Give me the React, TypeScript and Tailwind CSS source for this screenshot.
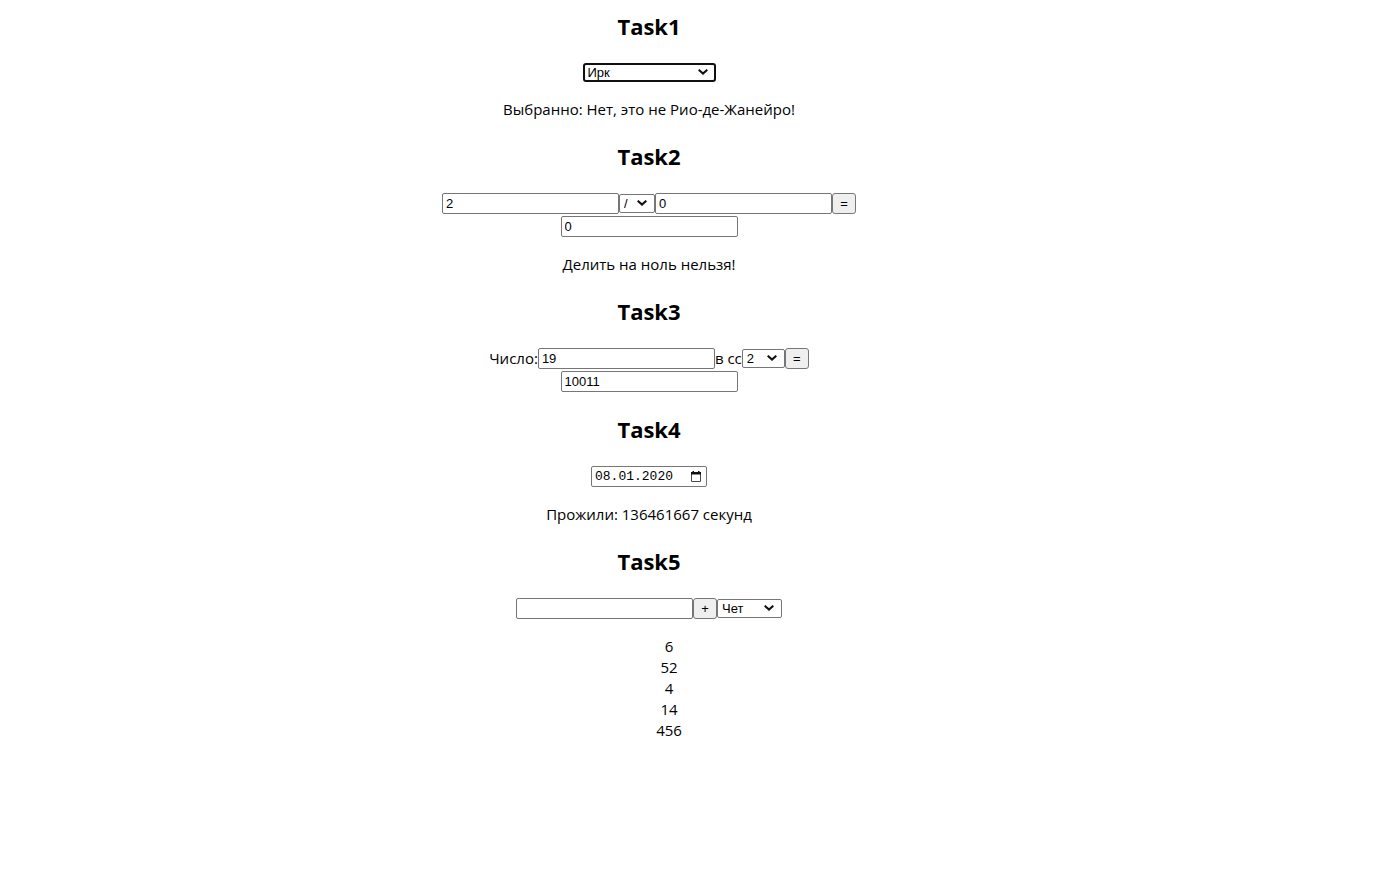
import { useState } from 'react';
import type { ReactNode } from 'react';

const field =
  "block h-[21px] w-[177px] rounded-[2px] border border-[#767676] bg-white px-[3px] font-['Liberation_Sans',Arial,sans-serif] text-[13px] leading-4 text-black";
const button =
  "block h-[21px] w-6 rounded-[3px] border border-[#767676] bg-[#efefef] font-['Liberation_Sans',Arial,sans-serif] text-[13px] leading-4 text-black";

function Task({ title, children }: { title: string; children: ReactNode }) {
  return (
    <section className="flex flex-col items-center">
      <h2 className="mb-5 text-[22px] leading-[31px] font-bold">{title}</h2>
      {children}
    </section>
  );
}

function Row({ children }: { children: ReactNode }) {
  return <div className="flex h-[23px] items-center justify-center">{children}</div>;
}

function Result({ children }: { children: ReactNode }) {
  return <p className="mt-4 leading-[21px]">{children}</p>;
}

interface PickerProps {
  id?: string;
  label?: string;
  look: string;
  value: string;
  options: string[];
  onChange: (value: string) => void;
}

function Picker({ id, label, look, value, options, onChange }: PickerProps) {
  return (
    <div className="relative">
      <select
        id={id}
        aria-label={label}
        value={value}
        onChange={(e) => onChange(e.target.value)}
        className={`${look} block h-[19px] appearance-none bg-white font-['Liberation_Sans',Arial,sans-serif] text-[13px] leading-[15px] text-black outline-none`}
      >
        {options.map((option) => (
          <option key={option}>{option}</option>
        ))}
      </select>
      <svg
        viewBox="0 0 10 6"
        className="pointer-events-none absolute top-1.5 right-2 h-1.5 w-2.5"
        fill="none"
        stroke="#101010"
        strokeWidth="2"
      >
        <path d="M0.700 0.700L5 4.600L9.300 0.700" />
      </svg>
    </div>
  );
}

const thin = 'rounded-[2px] border border-[#767676] pl-1';

export default function App() {
  const [city, setCity] = useState('Ирк');
  const [a, setA] = useState('2');
  const [op, setOp] = useState('/');
  const [b, setB] = useState('0');
  const [num, setNum] = useState('19');
  const [base, setBase] = useState('2');
  const [date, setDate] = useState('08.01.2020');
  const [item, setItem] = useState('');
  const [parity, setParity] = useState('Чет');

  return (
    <main className="flex flex-col gap-[21px] pt-[11px] pr-[100px] text-center font-['Open_Sans','Noto_Sans',sans-serif] text-[15px] text-black">
      <Task title="Task1">
        <div className="flex h-[21px] items-center">
          <Picker
            label="Город"
            look="w-[133px] rounded-[3px] border-2 border-[#101010] pl-[3px]"
            value={city}
            options={['Ирк', 'Рио-де-Жанейро']}
            onChange={setCity}
          />
        </div>
        <Result>Выбранно: Нет, это не Рио-де-Жанейро!</Result>
      </Task>

      <Task title="Task2">
        <Row>
          <input aria-label="Первое число" className={field} value={a} onChange={(e) => setA(e.target.value)} />
          <Picker label="Операция" look={`${thin} w-9`} value={op} options={['+', '-', '*', '/']} onChange={setOp} />
          <input aria-label="Второе число" className={field} value={b} onChange={(e) => setB(e.target.value)} />
          <button type="button" className={button}>=</button>
        </Row>
        <Row>
          <input aria-label="Результат" className={field} value="0" readOnly />
        </Row>
        <Result>Делить на ноль нельзя!</Result>
      </Task>

      <Task title="Task3">
        <Row>
          <label htmlFor="number">Число:</label>
          <input id="number" className={field} value={num} onChange={(e) => setNum(e.target.value)} />
          <label htmlFor="base">в сс</label>
          <Picker id="base" look={`${thin} w-[43px]`} value={base} options={['2', '8', '16']} onChange={setBase} />
          <button type="button" className={button}>=</button>
        </Row>
        <Row>
          <input aria-label="Запись числа" className={field} value="10011" readOnly />
        </Row>
      </Task>

      <Task title="Task4">
        <Row>
          <div className="flex h-[21px] w-[116px] items-center justify-between rounded-[2px] border border-[#767676] bg-white pr-1 pl-[3px]">
            <input
              aria-label="Дата рождения"
              className="w-[84px] font-['Liberation_Mono','Courier_New',monospace] text-[13px] leading-4 text-black outline-none"
              value={date}
              onChange={(e) => setDate(e.target.value)}
            />
            <button type="button" aria-label="Открыть календарь">
              <svg viewBox="0 0 12 14" className="block h-3.5 w-3" fill="none">
                <path d="M1.500 4v7.500h9V4" stroke="#4a4a4a" />
                <path d="M1 2h10v2.500H1zM2.500 1h1.500v1.500H2.500zM8 1h1.500v1.500H8z" fill="#101010" />
              </svg>
            </button>
          </div>
        </Row>
        <Result>Прожили: 136461667 секунд</Result>
      </Task>

      <Task title="Task5">
        <Row>
          <input aria-label="Новое число" className={field} value={item} onChange={(e) => setItem(e.target.value)} />
          <button type="button" className={button}>+</button>
          <Picker label="Фильтр" look={`${thin} w-[65px]`} value={parity} options={['Чет', 'Нечет']} onChange={setParity} />
        </Row>
        <ul className="mt-4 pl-10 leading-[21px]">
          {[6, 52, 4, 14, 456].map((n) => (
            <li key={n}>{n}</li>
          ))}
        </ul>
      </Task>
    </main>
  );
}
